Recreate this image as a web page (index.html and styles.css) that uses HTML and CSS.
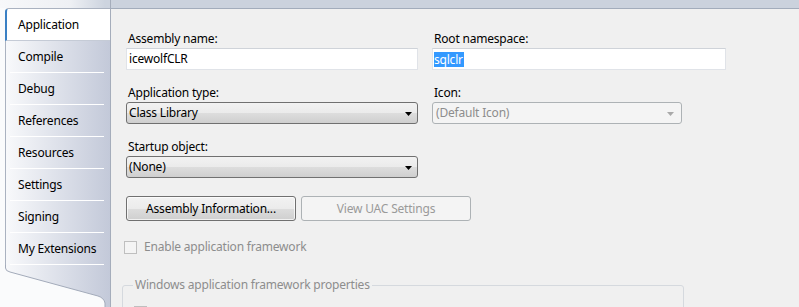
FILE: index.html
```html
<!DOCTYPE html>
<html>
<head>
<meta charset="utf-8">
<link rel="stylesheet" href="styles.css">
</head>
<body>
<div class="window">
  <aside class="sidebar">
    <div class="sidebar-top"></div>
    <nav class="strip">
      <div class="tab active">Application</div>
      <div class="tab">Compile</div>
      <div class="tab">Debug</div>
      <div class="tab">References</div>
      <div class="tab">Resources</div>
      <div class="tab">Settings</div>
      <div class="tab">Signing</div>
      <div class="tab">My Extensions</div>
    </nav>
    <div class="strip-foot">
      <svg width="105" height="42" viewBox="0 0 105 42">
        <defs>
          <linearGradient id="sg" x1="0" y1="0" x2="1" y2="0">
            <stop offset="0" stop-color="#f8f9fb"/>
            <stop offset="1" stop-color="#c3c9d9"/>
          </linearGradient>
        </defs>
        <path d="M0 0 H105 V42 H100 V38 Q99 33 93 31 L5 7 Q0.5 6 0.5 3 V0 Z" fill="url(#sg)"/>
        <path d="M0.5 0 V3 Q0.5 6 5 7 L93 31 Q99 33 100 38 V42" fill="none" stroke="#a3abba" stroke-width="1"/>
      </svg>
    </div>
  </aside>
  <main class="main">
    <div class="main-top"></div>
    <div class="content">
      <div class="row">
        <div class="field col-left">
          <div class="label">Assembly name:</div>
          <div class="textbox">icewolfCLR</div>
        </div>
        <div class="field col-right">
          <div class="label">Root namespace:</div>
          <div class="textbox"><span class="selected-text">sqlclr</span></div>
        </div>
      </div>
      <div class="row">
        <div class="field col-left">
          <div class="label">Application type:</div>
          <div class="combo">
            <span>Class Library</span>
            <svg class="arrow" width="7" height="4" viewBox="0 0 7 4"><polygon points="0,0 7,0 3.5,4" fill="#000"/></svg>
          </div>
        </div>
        <div class="field col-icon">
          <div class="label">Icon:</div>
          <div class="combo disabled">
            <span>(Default Icon)</span>
            <svg class="arrow" width="7" height="4" viewBox="0 0 7 4"><polygon points="0,0 7,0 3.5,4" fill="#a9a9a9"/></svg>
          </div>
        </div>
      </div>
      <div class="row">
        <div class="field col-left">
          <div class="label">Startup object:</div>
          <div class="combo">
            <span>(None)</span>
            <svg class="arrow" width="7" height="4" viewBox="0 0 7 4"><polygon points="0,0 7,0 3.5,4" fill="#000"/></svg>
          </div>
        </div>
      </div>
      <div class="buttons">
        <div class="button">Assembly Information...</div>
        <div class="button disabled">View UAC Settings</div>
      </div>
      <div class="check-row">
        <span class="checkbox"></span>
        <span class="check-label">Enable application framework</span>
      </div>
      <fieldset class="group">
        <legend class="group-title">Windows application framework properties</legend>
        <div class="check-row inner">
          <span class="checkbox"></span>
        </div>
      </fieldset>
    </div>
  </main>
</div>
</body>
</html>
```

FILE: styles.css
```css
* { box-sizing: border-box; }
html, body {
  margin: 0;
  padding: 0;
}
body {
  width: 799px;
  height: 307px;
  overflow: hidden;
  font-family: "Noto Sans", "Open Sans", sans-serif;
  font-size: 12px;
  letter-spacing: -0.2px;
  line-height: 16px;
  color: #000;
  background: #fafbfc;
}
.window {
  display: flex;
  width: 799px;
  height: 307px;
}
.sidebar {
  width: 110px;
  flex: none;
  display: flex;
  flex-direction: column;
  background: #fafbfc;
}
.sidebar-top {
  height: 8px;
  background: linear-gradient(to right, #f7f8fa 0px, #eef0f4 70px, #cdd4df 105px);
}
.strip {
  margin-left: 5px;
  border-left: 1px solid #aab2c0;
  border-top: 1px solid #aab2c0;
  border-top-left-radius: 4px;
  background: linear-gradient(to right, #f8f9fb, #c3c9d9);
  display: flex;
  flex-direction: column;
}
.tab {
  height: 32px;
  display: flex;
  align-items: center;
  border-bottom: 1px solid #ffffff;
  margin-right: 6px;
  margin-left: 4px;
  padding-left: 8px;
}
.tab.active {
  margin: 0 0 0 -1px;
  padding-left: 11px;
  height: 32px;
  background: #ffffff;
  border-left: 2px solid #3a80c4;
  border-bottom: 1px solid #c5cbd6;
  border-top-left-radius: 3px;
}
.strip-foot {
  margin-left: 5px;
  height: 42px;
  line-height: 0;
}
.main {
  flex: 1;
  display: flex;
  flex-direction: column;
  border-left: 1px solid #a5adbb;
  background: #f0f0f0;
}
.main-top {
  height: 9px;
  flex: none;
  background: #cbd2dd;
  border-bottom: 1px solid #a2acbb;
}
.content {
  padding: 21px 0 0 15px;
}
.row {
  display: flex;
  gap: 14px;
  margin-bottom: 14px;
}
.field {
  display: flex;
  flex-direction: column;
}
.col-left { width: 292px; }
.col-right { width: 294px; }
.col-icon { width: 250px; }
.label {
  height: 16px;
  padding-left: 2px;
  margin-bottom: 2px;
  white-space: nowrap;
  padding-top: 1px;
}
.textbox {
  height: 22px;
  background: #fff;
  border: 1px solid #e0e3e8;
  border-top-color: #cfd3d9;
  padding-left: 2px;
  display: flex;
  align-items: center;
}
.selected-text {
  background: #3399ff;
  color: #fff;
  line-height: 15px;
  padding: 0 1px 0 0;
  margin-left: -1px;
}
.combo {
  height: 22px;
  border: 1px solid #707070;
  border-radius: 3px;
  background: linear-gradient(#f2f2f2 0%, #ebebeb 50%, #dddddd 51%, #cfcfcf 100%);
  display: flex;
  align-items: center;
  justify-content: space-between;
  padding: 0 5px 0 2px;
}
.combo .arrow { flex: none; margin-top: 1px; }
.combo.disabled {
  background: #f4f4f4;
  border-color: #adb2b5;
  color: #8d8d8d;
  padding-left: 3px;
  padding-right: 7px;
}
.buttons {
  display: flex;
  gap: 5px;
  margin-top: 18px;
}
.button {
  width: 170px;
  height: 25px;
  border: 1px solid #707070;
  border-radius: 3px;
  background: linear-gradient(#f2f2f2 0%, #ebebeb 50%, #dddddd 51%, #cfcfcf 100%);
  box-shadow: inset 0 0 0 1px rgba(255,255,255,0.7);
  display: flex;
  align-items: center;
  justify-content: center;
}
.button.disabled {
  background: #f4f4f4;
  border-color: #adb2b5;
  box-shadow: none;
  color: #9a9a9a;
}
.check-row {
  display: flex;
  align-items: center;
  height: 16px;
  margin-top: 18px;
  margin-left: -2px;
  gap: 7px;
}
.checkbox {
  width: 13px;
  height: 13px;
  flex: none;
  border: 1px solid #bfbfbf;
  background: #f4f4f4;
}
.check-label {
  color: #8d8d8d;
}
.group {
  margin: 22px 0 0 -4px;
  width: 562px;
  height: 60px;
  border: 1px solid #d5d9de;
  border-radius: 3px;
  padding: 0 0 0 10px;
}
.group-title {
  color: #8d8d8d;
  padding: 0 2px;
  margin-left: 0;
  line-height: 16px;
}
.check-row.inner {
  margin-top: 11px;
  margin-left: 1px;
}
```
